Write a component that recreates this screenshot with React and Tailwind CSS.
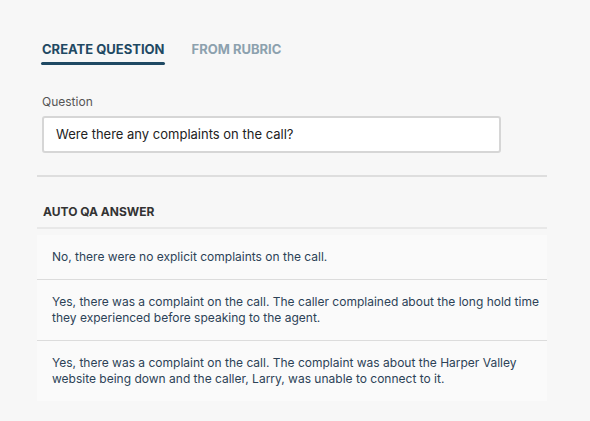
const answers = [
  'No, there were no explicit complaints on the call.',
  'Yes, there was a complaint on the call. The caller complained about the long hold time they experienced before speaking to the agent.',
  'Yes, there was a complaint on the call. The complaint was about the Harper Valley website being down and the caller, Larry, was unable to connect to it.',
];

function Tab({ label, active }) {
  return (
    <button
      className={
        active
          ? 'flex flex-col text-[13px] font-bold uppercase leading-4 text-[#1f4963]'
          : 'flex flex-col text-[13px] font-bold uppercase leading-4 text-[#8ca1ae]'
      }
    >
      <span className="pl-px">{label}</span>
      <span
        className={
          active ? 'mt-[5px] h-[3px] w-full rounded-full bg-[#1f4963]' : 'mt-[5px] h-[3px] w-full'
        }
      />
    </button>
  );
}

export default function App() {
  return (
    <div className="min-h-screen w-full bg-[#f7f7f7] font-['Inter','Liberation_Sans',sans-serif]">
      <div className="ml-[37px] w-[510px] pt-[41px] pb-6">
        <div className="flex gap-[26px] pl-1">
          <Tab label="Create Question" active />
          <Tab label="From Rubric" />
        </div>

        <div className="mt-[29px] pl-[5px]">
          <label className="block text-[12px] leading-4 text-[#555555]">Question</label>
          <div className="mt-[6px] flex h-[37px] w-[459px] items-center rounded-[3px] border-2 border-[#d6d6d6] bg-white px-3 text-[13px] text-[#222222]">
            Were there any complaints on the call?
          </div>
        </div>

        <div className="mt-[22px] h-[2px] w-full bg-[#dedede]" />

        <div className="mt-[27px] border-b-2 border-[#e8e8e8] pb-[7px] pl-[6px] text-[12px] font-bold uppercase leading-4 text-[#333333]">
          Auto QA Answer
        </div>

        <div className="mt-[6px] bg-[#fafafa]">
          {answers.map((a, i) => (
            <p
              key={i}
              className={
                i
                  ? 'border-t border-[#dcdcdc] py-[14px] pr-[6px] pl-[15px] text-[12px] leading-4 text-[#2c4257]'
                  : 'py-[14px] pr-[6px] pl-[15px] text-[12px] leading-4 text-[#2c4257]'
              }
            >
              {a}
            </p>
          ))}
        </div>
      </div>
    </div>
  );
}
